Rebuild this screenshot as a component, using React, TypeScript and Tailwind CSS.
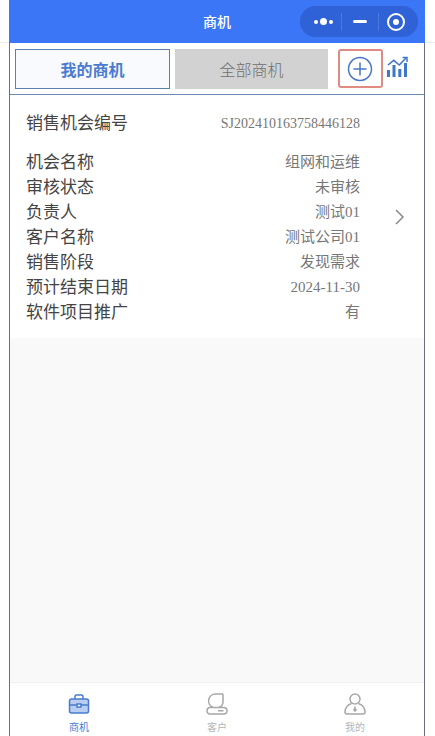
const font = { fontFamily: '"Liberation Serif", "Noto Sans CJK SC", serif' }

const rows = [
  ['机会名称', '组网和运维'],
  ['审核状态', '未审核'],
  ['负责人', '测试01'],
  ['客户名称', '测试公司01'],
  ['销售阶段', '发现需求'],
  ['预计结束日期', '2024-11-30'],
  ['软件项目推广', '有'],
]

const App = () => {
  return (
    <div className="relative h-[736px] w-[435px] overflow-hidden bg-white pl-[9px] pr-[10px] font-['Noto_Sans_CJK_SC',sans-serif]">
      {/* faint line outside the phone frame */}
      <div className="absolute inset-x-0 top-[42px] h-px bg-[#eeeeee]" />
      <div className="relative flex h-full flex-col border-x border-[#6b6f76] bg-[#f9f9f9]">
        <header className="relative -mx-px flex h-[43px] shrink-0 items-center justify-center bg-[#3b76f6]">
          <span className="text-[14px] font-medium text-white">商机</span>
          <div className="absolute left-[291px] top-[6px] flex h-[31px] w-[118px] items-center rounded-full bg-[#2f62d6]">
            <div className="flex w-[41px] items-center justify-center gap-[2px] pl-[5px]">
              <i className="size-[4px] rounded-full bg-white" />
              <i className="size-[7px] rounded-full bg-white" />
              <i className="size-[4px] rounded-full bg-white" />
            </div>
            <i className="h-[18px] w-px bg-[#4d79de]" />
            <div className="flex w-[36px] items-center justify-center">
              <i className="h-[3px] w-[14px] rounded-sm bg-white" />
            </div>
            <i className="h-[18px] w-px bg-[#4d79de]" />
            <div className="flex flex-1 items-center justify-center pr-[6px]">
              <div className="flex size-[18px] items-center justify-center rounded-full border-2 border-white">
                <i className="size-[6px] rounded-full bg-white" />
              </div>
            </div>
          </div>
        </header>

        <div className="flex h-[52px] shrink-0 items-center border-b border-[#6b8db5] bg-white pl-[5px]">
          <div className="flex h-[40px] w-[155px] items-center justify-center border border-[#5a80ad] bg-[#f8fafd] text-[16px] font-bold text-[#4a7bd0]">我的商机</div>
          <div className="ml-[5px] flex h-[40px] w-[153px] items-center justify-center bg-[#d2d2d2] text-[16px] font-light text-[#6f6f6f]">全部商机</div>
          <div className="ml-[10px] flex h-[39px] w-[45px] items-center justify-center rounded-[3px] border-2 border-[#e08a84] pr-[1px]">
            <svg width="26" height="26" viewBox="0 0 26 26" fill="none" stroke="#4a76c8" strokeWidth="1.500">
              <circle cx="13" cy="13" r="11.500" />
              <path d="M13 6.500v13M6.500 13h13" />
            </svg>
          </div>
          <svg className="-mt-[3px] ml-[4px]" width="22" height="22" viewBox="0 0 22 22" fill="none" stroke="#3f78c9">
            <path d="M1 9l5.700-4.700L12.300 9 19 2" strokeWidth="1.600" />
            <path d="M15.500 1.500h4.500v4.500" strokeWidth="1.500" />
            <path d="M1.500 21v-7M7 21V9M12.800 21v-8M18.500 21V7" strokeWidth="3" />
          </svg>
        </div>

        <section className="relative h-[243px] shrink-0 bg-white pl-[16px] pr-[64px] pt-[16px] text-[#444]">
          <div className="flex h-[25px] items-center justify-between">
            <span className="pb-[4px] text-[17px] leading-[25px]">销售机会编号</span>
            <span className="text-[14px] text-[#777]" style={font}>SJ202410163758446128</span>
          </div>
          <div className="mt-[14px]">
            {rows.map(([label, value]) => (
              <div key={label} className="flex h-[25px] items-center justify-between">
                <span className="pb-[4px] text-[17px] leading-[25px]">{label}</span>
                <span className="text-[15px] text-[#777]" style={font}>{value}</span>
              </div>
            ))}
          </div>
          <svg className="absolute right-[18px] top-[114px]" width="12" height="16" viewBox="0 0 12 16" fill="none" stroke="#8a8a8a" strokeWidth="1.500">
            <path d="M2 1l7 7-7 7" />
          </svg>
        </section>

        <div className="flex-1" />

        <nav className="flex h-[54px] shrink-0 border-t border-[#f0f0f0] bg-white">
          <div className="flex flex-1 flex-col items-center pt-[10px]">
            <svg width="22" height="22" viewBox="0 0 22 22" fill="none" stroke="#4a7bd0" strokeWidth="1.500">
              <rect x="1.500" y="6" width="19" height="14" rx="2" fill="#b9cdf1" />
              <path d="M7 6V3.500a1.500 1.500 0 0 1 1.500-1.500h5A1.500 1.500 0 0 1 15 3.500V6M1.500 12h19" />
              <rect x="9" y="11" width="4" height="3" fill="#fff" />
            </svg>
            <span className="mt-[5px] text-[10px] leading-[14px] text-[#4a7bd0]">商机</span>
          </div>
          <div className="flex flex-1 flex-col items-center pt-[10px]">
            <svg width="22" height="22" viewBox="0 0 22 22" fill="none" stroke="#a8a8a8" strokeWidth="1.500">
              <path d="M17 1H9.500a7 7 0 0 0-2.500 13.500" />
              <path d="M17 1v8a6 6 0 0 1-4 5.500" />
              <rect x="1" y="14.500" width="20" height="6.500" rx="3.250" />
              <path d="M12 17.750h5.500" />
            </svg>
            <span className="mt-[5px] text-[10px] leading-[14px] text-[#b5b5b5]">客户</span>
          </div>
          <div className="flex flex-1 flex-col items-center pt-[10px]">
            <svg width="22" height="22" viewBox="0 0 22 22" fill="none" stroke="#a8a8a8" strokeWidth="1.500">
              <circle cx="11" cy="6" r="5" />
              <path d="M7.500 10.500C3.500 12 1 15.500 1 19a2 2 0 0 0 2 2h16a2 2 0 0 0 2-2c0-3.500-2.500-7-6.500-8.500" />
              <path d="M11 13.500v4M9.500 16l1.500 2 1.500-2" />
            </svg>
            <span className="mt-[5px] text-[10px] leading-[14px] text-[#b5b5b5]">我的</span>
          </div>
        </nav>
      </div>
    </div>
  )
}

export default App
